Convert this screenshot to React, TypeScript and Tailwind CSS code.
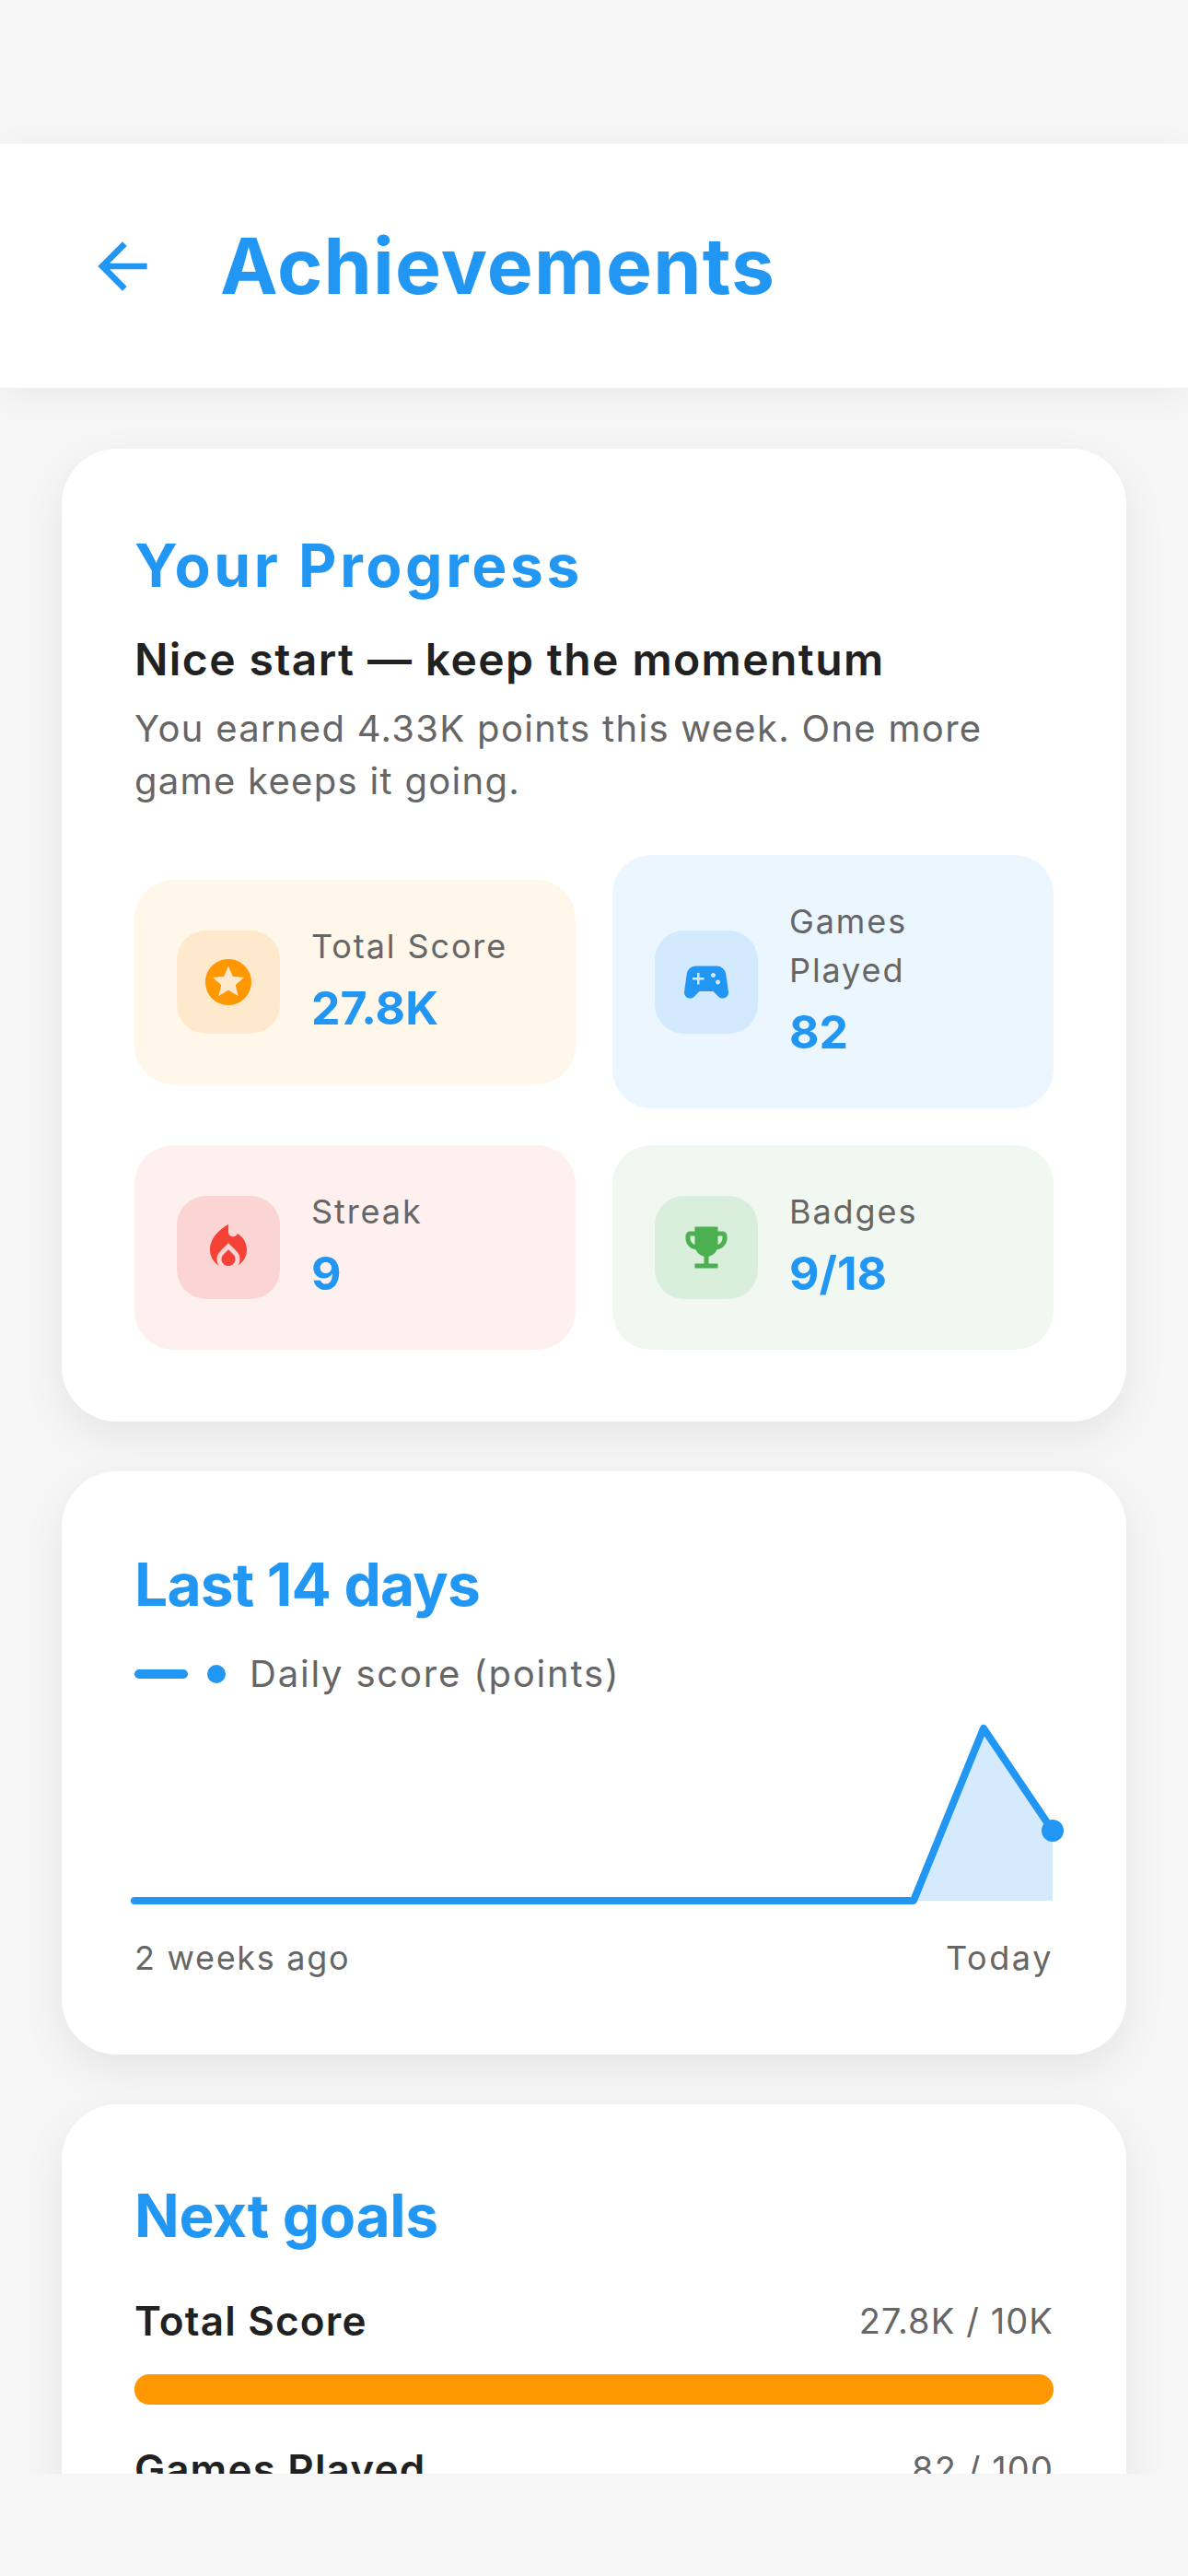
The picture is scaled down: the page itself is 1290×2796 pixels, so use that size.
import { MdArrowBack, MdStars, MdSportsEsports, MdLocalFireDepartment, MdEmojiEvents } from "react-icons/md";
import type { ReactNode } from "react";

function StatTile({
  tint,
  boxTint,
  icon,
  label,
  value,
}: {
  tint: string;
  boxTint: string;
  icon: ReactNode;
  label: ReactNode;
  value: string;
}) {
  return (
    <div className={`flex items-center gap-[34px] rounded-[42px] px-[46px] py-[46px] ${tint}`}>
      <div className={`flex h-[112px] w-[112px] shrink-0 items-center justify-center rounded-[32px] ${boxTint}`}>
        {icon}
      </div>
      <div className="flex flex-col">
        <div className="text-[36px] leading-[53px] tracking-[1.9px] text-[#666666]">{label}</div>
        <div className="mt-[3px] text-[50px] leading-[74px] font-bold text-[#2196f3]">{value}</div>
      </div>
    </div>
  );
}

function GoalRow({ label, value }: { label: string; value: string }) {
  return (
    <div className="flex items-center justify-between leading-[60px]">
      <span className="text-[44px] font-semibold tracking-[1.2px] text-[#212121]">{label}</span>
      <span className="text-[38px] tracking-[1.1px] text-[#666666]">{value}</span>
    </div>
  );
}

export default function App() {
  return (
    <div className="flex h-[2796px] w-[1290px] flex-col overflow-hidden bg-[#f6f6f6] font-[Inter,sans-serif]">
      <div className="h-[156px] shrink-0" />

      <header className="relative z-10 flex h-[265px] shrink-0 items-center bg-white pl-[93px] shadow-[0_8px_36px_rgba(0,0,0,0.05)]">
        <MdArrowBack size={80} className="text-[#2196f3]" />
        <h1 className="ml-[66px] text-[84px] leading-none font-bold tracking-[1.2px] text-[#2196f3]">Achievements</h1>
      </header>

      <main className="flex h-[2264px] shrink-0 flex-col gap-[54px] overflow-hidden px-[67px] pt-[66px]">
        <section className="shrink-0 rounded-[60px] bg-white px-[79px] pt-[79px] pb-[78px] shadow-[0_16px_48px_rgba(0,0,0,0.07)]">
          <h2 className="text-[64px] leading-[96px] font-bold tracking-[3.6px] text-[#2196f3]">Your Progress</h2>
          <p className="mt-[18px] text-[48px] leading-[72px] font-semibold tracking-[1.4px] text-[#212121]">
            Nice start — keep the momentum
          </p>
          <p className="mt-[10px] text-[40px] leading-[57px] tracking-[1.3px] text-[#666666]">
            You earned 4.33K points this week. One more game keeps it going.
          </p>
          <div className="mt-[52px] grid grid-cols-2 items-center gap-[40px]">
            <StatTile
              tint="bg-[#fff7ea]"
              boxTint="bg-[#fee9cc]"
              icon={<MdStars size={60} className="text-[#ff9800]" />}
              label="Total Score"
              value="27.8K"
            />
            <StatTile
              tint="bg-[#ebf6ff]"
              boxTint="bg-[#d2e9fe]"
              icon={<MdSportsEsports size={60} className="text-[#2196f3]" />}
              label={
                <>
                  Games
                  <br />
                  Played
                </>
              }
              value="82"
            />
            <StatTile
              tint="bg-[#fef0ef]"
              boxTint="bg-[#fbd5d3]"
              icon={<MdLocalFireDepartment size={60} className="text-[#f44336]" />}
              label="Streak"
              value="9"
            />
            <StatTile
              tint="bg-[#f1f8f1]"
              boxTint="bg-[#d9eedb]"
              icon={<MdEmojiEvents size={60} className="text-[#4caf50]" />}
              label="Badges"
              value="9/18"
            />
          </div>
        </section>

        <section className="shrink-0 rounded-[60px] bg-white px-[79px] pt-[79px] pb-[78px] shadow-[0_16px_48px_rgba(0,0,0,0.07)]">
          <h2 className="text-[64px] leading-[88px] font-bold tracking-[-0.8px] text-[#2196f3]">Last 14 days</h2>
          <div className="mt-[26px] flex items-center">
            <span className="h-[10px] w-[58px] rounded-full bg-[#2196f3]" />
            <span className="ml-[21px] h-[20px] w-[20px] rounded-full bg-[#2196f3]" />
            <span className="ml-[26px] text-[40px] leading-[54px] tracking-[1.8px] text-[#666666]">
              Daily score (points)
            </span>
          </div>
          <svg viewBox="0 0 998 210" className="mt-[16px] block h-[210px] w-[998px] overflow-visible">
            <path d="M846 203L922 16L997 127V203Z" fill="#d5ebfd" />
            <path
              d="M0 203H846L922 16L997 127"
              fill="none"
              stroke="#2196f3"
              strokeWidth="8"
              strokeLinecap="round"
              strokeLinejoin="round"
            />
            <circle cx="997" cy="127" r="12" fill="#2196f3" />
          </svg>
          <div className="mt-[28px] flex justify-between text-[36px] leading-[54px] text-[#666666]">
            <span className="tracking-[1.7px]">2 weeks ago</span>
            <span className="tracking-[2.6px]">Today</span>
          </div>
        </section>

        <section className="shrink-0 rounded-[60px] bg-white px-[79px] pt-[79px] pb-[78px] shadow-[0_16px_48px_rgba(0,0,0,0.07)]">
          <h2 className="text-[64px] leading-[84px] font-bold tracking-[-0.3px] text-[#2196f3]">Next goals</h2>
          <div className="mt-[42px]">
            <GoalRow label="Total Score" value="27.8K / 10K" />
          </div>
          <div className="mt-[28px] h-[33px] rounded-[16px] bg-[#ff9800]" />
          <div className="mt-[40px]">
            <GoalRow label="Games Played" value="82 / 100" />
          </div>
        </section>
      </main>
    </div>
  );
}
